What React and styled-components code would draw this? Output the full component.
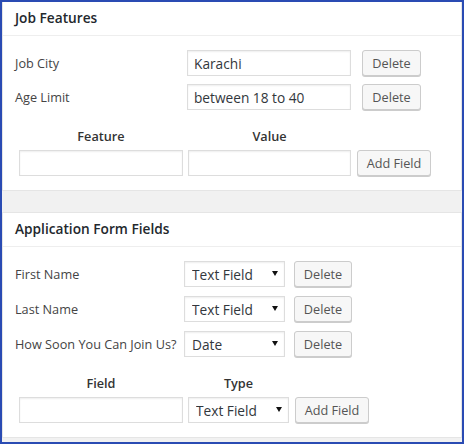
import React from 'react';
import styled, { createGlobalStyle } from 'styled-components';

const GlobalStyle = createGlobalStyle`
  body {
    margin: 0;
    background: #fff;
    font-family: "Open Sans", "Liberation Sans", sans-serif;
  }
`;

const Frame = styled.div`
  width: 464px;
  height: 444px;
  box-sizing: border-box;
  border: 2px solid #2a4bb3;
  background: #f1f1f1;
  display: flex;
  flex-direction: column;
  gap: 21px;
`;

const Panel = styled.div`
  background: #fff;
  border: 1px solid #e5e5e5;
  border-top: ${p => (p.$first ? 'none' : '1px solid #e5e5e5')};
`;

const PanelHeader = styled.h2`
  margin: 0;
  height: 34px;
  padding: 0 12px 2px;
  box-sizing: border-box;
  display: flex;
  align-items: center;
  border-bottom: 1px solid #eee;
  font-size: 13.7px;
  font-weight: 600;
  color: #23282d;
`;

const PanelBody = styled.div`
  padding: 14px 12px;
`;

const Rows = styled.div`
  display: flex;
  flex-direction: column;
  gap: ${p => p.$gap}px;
`;

const Row = styled.div`
  display: flex;
  align-items: center;
  height: 26px;
`;

const Label = styled.label`
  width: ${p => p.$width}px;
  flex-shrink: 0;
  font-size: 12.7px;
  color: #444;
`;

const TextInput = styled.input`
  width: ${p => p.$width}px;
  height: 26px;
  box-sizing: border-box;
  border: 1px solid #ddd;
  box-shadow: inset 0 1px 2px rgba(0, 0, 0, 0.07);
  padding: 0 6px;
  font-family: inherit;
  font-size: 13.7px;
  color: #32373c;
  background: #fff;
  outline: none;
`;

const SelectWrap = styled.div`
  position: relative;
  width: ${p => p.$width}px;
  height: 26px;
  flex-shrink: 0;
`;

const Select = styled.select`
  appearance: none;
  width: 100%;
  height: 100%;
  box-sizing: border-box;
  border: 1px solid #ddd;
  box-shadow: inset 0 1px 2px rgba(0, 0, 0, 0.07);
  border-radius: 0;
  padding: 0 20px 0 7px;
  font-family: inherit;
  font-size: 13.7px;
  color: #32373c;
  background: #fff;
  outline: none;
`;

const Arrow = styled.svg`
  position: absolute;
  right: 7px;
  top: 10px;
  pointer-events: none;
`;

const Button = styled.button`
  width: ${p => p.$width}px;
  height: 26px;
  margin-left: ${p => p.$gap}px;
  flex-shrink: 0;
  box-sizing: border-box;
  border: 1px solid #ccc;
  border-radius: 3px;
  background: #f7f7f7;
  box-shadow: 0 1px 0 #ccc;
  padding: 0;
  font-family: inherit;
  font-size: 12.7px;
  color: #555;
  cursor: pointer;
`;

const ColumnHeads = styled.div`
  display: flex;
  gap: 5px;
  margin: 17px 0 5px 4px;
  height: 18px;
`;

const ColumnHead = styled.div`
  width: ${p => p.$width}px;
  text-align: center;
  font-size: 12.7px;
  line-height: 18px;
  font-weight: 600;
  color: #333;
`;

const AddRow = styled.div`
  display: flex;
  align-items: center;
  gap: 5px;
  margin-left: 4px;
  height: 26px;
`;

function Dropdown({ value, width }) {
  return (
    <SelectWrap $width={width}>
      <Select defaultValue={value}>
        <option>Text Field</option>
        <option>Date</option>
        <option>Text Area</option>
      </Select>
      <Arrow width="6" height="5" viewBox="0 0 6 5">
        <path d="M0 0 L6 0 L3 5 Z" fill="#111" />
      </Arrow>
    </SelectWrap>
  );
}

const features = [
  { name: 'Job City', value: 'Karachi' },
  { name: 'Age Limit', value: 'between 18 to 40' },
];

const formFields = [
  { name: 'First Name', type: 'Text Field' },
  { name: 'Last Name', type: 'Text Field' },
  { name: 'How Soon You Can Join Us?', type: 'Date' },
];

export default function App() {
  return (
    <>
      <GlobalStyle />
      <Frame>
        <Panel $first>
          <PanelHeader>Job Features</PanelHeader>
          <PanelBody>
            <Rows $gap={8}>
              {features.map(f => (
                <Row key={f.name}>
                  <Label $width={172}>{f.name}</Label>
                  <TextInput $width={164} defaultValue={f.value} />
                  <Button $width={59} $gap={11}>Delete</Button>
                </Row>
              ))}
            </Rows>
            <ColumnHeads>
              <ColumnHead $width={164}>Feature</ColumnHead>
              <ColumnHead $width={163}>Value</ColumnHead>
            </ColumnHeads>
            <AddRow>
              <TextInput $width={164} />
              <TextInput $width={163} />
              <Button $width={74} $gap={1}>Add Field</Button>
            </AddRow>
          </PanelBody>
        </Panel>

        <Panel>
          <PanelHeader>Application Form Fields</PanelHeader>
          <PanelBody>
            <Rows $gap={9}>
              {formFields.map(f => (
                <Row key={f.name}>
                  <Label $width={169}>{f.name}</Label>
                  <Dropdown value={f.type} width={101} />
                  <Button $width={58} $gap={9}>Delete</Button>
                </Row>
              ))}
            </Rows>
            <ColumnHeads>
              <ColumnHead $width={164}>Field</ColumnHead>
              <ColumnHead $width={101}>Type</ColumnHead>
            </ColumnHeads>
            <AddRow>
              <TextInput $width={164} />
              <Dropdown value="Text Field" width={101} />
              <Button $width={74} $gap={1}>Add Field</Button>
            </AddRow>
          </PanelBody>
        </Panel>
      </Frame>
    </>
  );
}
